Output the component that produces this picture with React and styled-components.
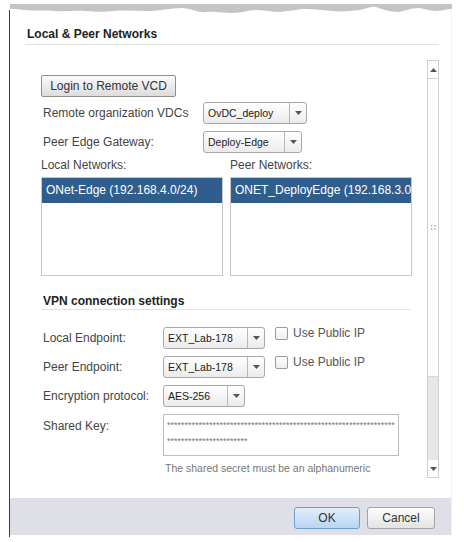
import React from 'react';
import styled, { createGlobalStyle } from 'styled-components';

const GlobalStyle = createGlobalStyle`
    html, body {
        margin: 0;
        padding: 0;
        background: #ffffff;
    }

    body {
        font-family: "Liberation Sans", Arial, sans-serif;
        font-size: 12px;
        color: #444444;
    }
`;

const localNetworks = ['ONet-Edge (192.168.4.0/24)'];
const peerNetworks = ['ONET_DeployEdge (192.168.3.0/24)'];

function TornEdge() {
    return (
        <TornSvg viewBox="0 0 442 10" preserveAspectRatio="none">
            <path
                d="M0 0 H442 V5 C436 5 432 7 426 7 C418 7 414 4 408 4 C400 4 396 7 388 8 C380 8 372 5 366 3 C360 2 356 5 350 6 C340 7 330 8 322 7 C312 6 304 5 296 5 C288 5 280 7 270 8 C262 8 254 6 246 6 C238 6 232 9 222 9 C214 9 206 7 196 8 C188 9 180 4 172 4 C160 4 150 7 140 7 C128 7 116 6 104 7 C94 8 86 8 76 7 C66 6 56 8 46 7 C34 6 24 7 14 6 C8 5 4 5 0 5 Z"
                fill="#c4c4c4"
            />
        </TornSvg>
    );
}

function Caret() {
    return (
        <svg width="7" height="4" viewBox="0 0 7 4">
            <path d="M0 0 H7 L3.5 4 Z" fill="#555555" />
        </svg>
    );
}

function Dropdown({ value, width }) {
    return (
        <SelectBox width={width}>
            <SelectValue>{value}</SelectValue>
            <SelectArrow>
                <Caret />
            </SelectArrow>
        </SelectBox>
    );
}

function App() {
    return (
        <>
            <GlobalStyle />
            <Page>
                <Dialog>
                    <TornEdge />
                    <Header>
                        <Title>Local &amp; Peer Networks</Title>
                    </Header>
                    <Body>
                        <Content>
                            <LoginButton>Login to Remote VCD</LoginButton>
                            <Row gap={5}>
                                <RowLabel width={162}>Remote organization VDCs</RowLabel>
                                <Dropdown value="OvDC_deploy" width={104} />
                            </Row>
                            <Row gap={7}>
                                <RowLabel width={162}>Peer Edge Gateway:</RowLabel>
                                <Dropdown value="Deploy-Edge" width={99} />
                            </Row>
                            <Networks>
                                <NetColumn>
                                    <NetLabel>Local Networks:</NetLabel>
                                    <NetList>
                                        {localNetworks.map((n) => (
                                            <NetItem key={n}>{n}</NetItem>
                                        ))}
                                    </NetList>
                                </NetColumn>
                                <NetColumn>
                                    <NetLabel>Peer Networks:</NetLabel>
                                    <NetList>
                                        {peerNetworks.map((n) => (
                                            <NetItem key={n}>{n}</NetItem>
                                        ))}
                                    </NetList>
                                </NetColumn>
                            </Networks>

                            <SectionTitle>VPN connection settings</SectionTitle>

                            <Row gap={17}>
                                <RowLabel width={122}>Local Endpoint:</RowLabel>
                                <Dropdown value="EXT_Lab-178" width={102} />
                                <Check />
                                <CheckText>Use Public IP</CheckText>
                            </Row>
                            <Row gap={7}>
                                <RowLabel width={122}>Peer Endpoint:</RowLabel>
                                <Dropdown value="EXT_Lab-178" width={102} />
                                <Check />
                                <CheckText>Use Public IP</CheckText>
                            </Row>
                            <Row gap={7}>
                                <RowLabel width={122}>Encryption protocol:</RowLabel>
                                <Dropdown value="AES-256" width={82} />
                            </Row>
                            <KeyRow>
                                <KeyLabel>Shared Key:</KeyLabel>
                                <KeyBox>{'*'.repeat(88)}</KeyBox>
                            </KeyRow>
                            <Hint>The shared secret must be an alphanumeric</Hint>
                        </Content>
                        <ScrollBar>
                            <ScrollArrow>
                                <svg width="7" height="4" viewBox="0 0 7 4">
                                    <path d="M0 4 H7 L3.5 0 Z" fill="#555555" />
                                </svg>
                            </ScrollArrow>
                            <Thumb>
                                <svg width="5" height="5" viewBox="0 0 5 5">
                                    <rect x="0" y="0" width="1.4" height="1.4" fill="#9a9a9a" />
                                    <rect x="3.4" y="0" width="1.4" height="1.4" fill="#9a9a9a" />
                                    <rect x="0" y="3.4" width="1.4" height="1.4" fill="#9a9a9a" />
                                    <rect x="3.4" y="3.4" width="1.4" height="1.4" fill="#9a9a9a" />
                                </svg>
                            </Thumb>
                            <Track />
                            <ScrollArrow bottom>
                                <Caret />
                            </ScrollArrow>
                        </ScrollBar>
                    </Body>
                    <Footer>
                        <FooterButton primary width={66}>OK</FooterButton>
                        <FooterButton width={68}>Cancel</FooterButton>
                    </Footer>
                </Dialog>
            </Page>
        </>
    );
}

const Page = styled.div`
    width: 464px;
    height: 542px;
    padding-top: 10px;
    box-sizing: border-box;
    background: #ffffff;
`;

const Dialog = styled.div`
    position: relative;
    margin-left: 9px;
    width: 443px;
    height: 527px;
    box-sizing: border-box;
    border-left: 1px solid #3c3c3c;
    border-right: 1px solid #f2f2f2;
    display: flex;
    flex-direction: column;
    background: #ffffff;
`;

const TornSvg = styled.svg`
    position: absolute;
    top: -6px;
    left: 0;
    width: 442px;
    height: 10px;
`;

const Header = styled.div`
    margin: 0 12px 0 15px;
    padding: 17px 0 3px 2px;
    border-bottom: 1px solid #dde4e2;
`;

const Title = styled.div`
    font-weight: bold;
    font-size: 12px;
    line-height: 14px;
    color: #222222;
`;

const Body = styled.div`
    margin: 15px 12px 0 15px;
    height: 418px;
    display: flex;
`;

const Content = styled.div`
    flex: 1;
    overflow: hidden;
    padding: 15px 0 0 16px;
`;

const LoginButton = styled.div`
    width: 135px;
    height: 22px;
    box-sizing: border-box;
    border: 1px solid #8e8e8e;
    border-radius: 2px;
    background: linear-gradient(#fbfbfb, #dcdcdc);
    display: flex;
    align-items: center;
    justify-content: center;
    font-size: 12px;
    color: #333333;
`;

const Row = styled.div`
    display: flex;
    align-items: center;
    height: 22px;
    margin-top: ${(props) => props.gap}px;
`;

const RowLabel = styled.div`
    width: ${(props) => props.width}px;
    padding-left: 2px;
    box-sizing: border-box;
    line-height: 14px;
    color: #444444;
    flex-shrink: 0;
`;

const SelectBox = styled.div`
    width: ${(props) => props.width}px;
    height: 22px;
    box-sizing: border-box;
    border: 1px solid #a8a8a8;
    border-radius: 3px;
    background: linear-gradient(#ffffff, #ebebeb);
    display: flex;
    flex-shrink: 0;
`;

const SelectValue = styled.div`
    flex: 1;
    padding-left: 4px;
    font-size: 10.5px;
    line-height: 20px;
    color: #222222;
    white-space: nowrap;
    overflow: hidden;
`;

const SelectArrow = styled.div`
    width: 16px;
    border-left: 1px solid #b8b8b8;
    display: flex;
    align-items: center;
    justify-content: center;
`;

const Check = styled.div`
    width: 13px;
    height: 13px;
    box-sizing: border-box;
    margin-left: 10px;
    border: 1px solid #9a9a9a;
    border-radius: 2px;
    background: linear-gradient(#ffffff, #eeeeee);
    align-self: flex-start;
`;

const CheckText = styled.div`
    margin-left: 5px;
    align-self: flex-start;
    line-height: 13px;
    color: #555555;
`;

const Networks = styled.div`
    display: grid;
    grid-template-columns: 182px 182px;
    column-gap: 7px;
    margin-top: 5px;
`;

const NetColumn = styled.div`
    display: flex;
    flex-direction: column;
`;

const NetLabel = styled.div`
    line-height: 14px;
    color: #444444;
    margin-bottom: 5px;
`;

const NetList = styled.div`
    height: 99px;
    box-sizing: border-box;
    border: 1px solid #c8c8c8;
    background: #ffffff;
    overflow: hidden;
`;

const NetItem = styled.div`
    height: 25px;
    line-height: 24px;
    padding-left: 4px;
    background: #2f5e8e;
    color: #ffffff;
    white-space: nowrap;
    overflow: hidden;
`;

const SectionTitle = styled.div`
    margin: 18px 16px 0 0;
    padding: 0 0 1px 2px;
    border-bottom: 1px solid #dde4e2;
    font-weight: bold;
    line-height: 14px;
    color: #222222;
`;

const KeyRow = styled.div`
    display: flex;
    margin-top: 7px;
`;

const KeyLabel = styled.div`
    width: 122px;
    padding: 5px 0 0 2px;
    box-sizing: border-box;
    line-height: 14px;
    color: #444444;
`;

const KeyBox = styled.div`
    width: 236px;
    height: 42px;
    box-sizing: border-box;
    border: 1px solid #bdbdbd;
    padding: 2px 3px;
    font-size: 9px;
    line-height: 16px;
    color: #777777;
    word-break: break-all;
    overflow: hidden;
`;

const Hint = styled.div`
    margin: 5px 0 0 124px;
    font-size: 10.5px;
    line-height: 14px;
    color: #777777;
    white-space: nowrap;
`;

const ScrollBar = styled.div`
    width: 12px;
    box-sizing: border-box;
    border: 1px solid #cfcfcf;
    display: flex;
    flex-direction: column;
    flex-shrink: 0;
`;

const ScrollArrow = styled.div`
    height: 17px;
    background: #ffffff;
    display: flex;
    align-items: center;
    justify-content: center;
    border-bottom: ${(props) => (props.bottom ? 'none' : '1px solid #cfcfcf')};
`;

const Thumb = styled.div`
    height: 297px;
    background: #ffffff;
    border-bottom: 1px solid #d6d6d6;
    display: flex;
    align-items: center;
    justify-content: center;
`;

const Track = styled.div`
    flex: 1;
    background: #e7e7e7;
`;

const Footer = styled.div`
    margin-top: 20px;
    height: 37px;
    background: #dfdfe8;
    display: flex;
    justify-content: flex-end;
    align-items: flex-start;
    gap: 7px;
    padding: 9px 16px 0 0;
    box-sizing: border-box;
`;

const FooterButton = styled.div`
    width: ${(props) => props.width}px;
    height: 22px;
    box-sizing: border-box;
    border-radius: 3px;
    border: 1px solid ${(props) => (props.primary ? '#6e9fd2' : '#a3a3a3')};
    background: ${(props) => (props.primary
        ? 'linear-gradient(#e2eefb, #b9d5f2)'
        : 'linear-gradient(#fdfdfd, #e3e3e3)')};
    display: flex;
    align-items: center;
    justify-content: center;
    font-size: 12px;
    color: #333333;
`;

export default App;
